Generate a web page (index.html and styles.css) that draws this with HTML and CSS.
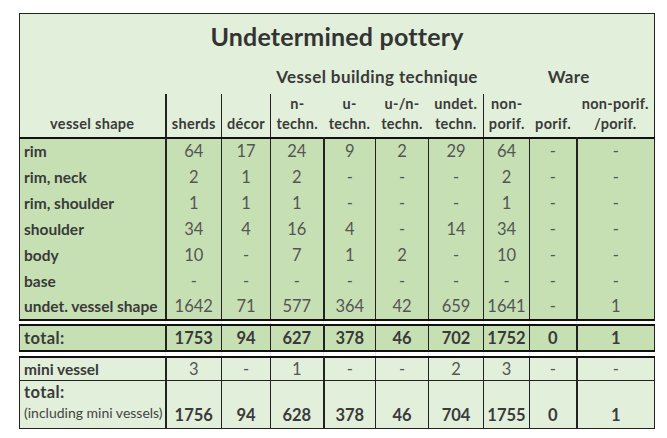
FILE: index.html
```html
<!DOCTYPE html>
<html>
<head>
<meta charset="utf-8">
<link rel="stylesheet" href="styles.css">
</head>
<body>
<table class="pot">
  <colgroup>
    <col class="c-shape"><col class="c-sherds"><col class="c-decor"><col class="c-n"><col class="c-u"><col class="c-un"><col class="c-undet"><col class="c-nonp"><col class="c-porif"><col class="c-last">
  </colgroup>
  <tr class="r-title"><td colspan="10" class="title">Undetermined pottery</td></tr>
  <tr class="r-group">
    <td colspan="3"></td>
    <td colspan="4" class="group">Vessel building technique</td>
    <td colspan="3" class="group">Ware</td>
  </tr>
  <tr class="r-head">
    <th class="b-thick">vessel shape</th>
    <th class="b-thin">sherds</th>
    <th class="b-thin">décor</th>
    <th>n-<br>techn.</th>
    <th>u-<br>techn.</th>
    <th>u-/n-<br>techn.</th>
    <th class="b-thin">undet.<br>techn.</th>
    <th>non-<br>porif.</th>
    <th>porif.</th>
    <th>non-porif.<br>/porif.</th>
  </tr>
  <tr class="r-body first"><td class="lbl">rim</td><td>64</td><td>17</td><td class="tk">24</td><td>9</td><td>2</td><td>29</td><td>64</td><td class="tk">-</td><td>-</td></tr>
  <tr class="r-body"><td class="lbl">rim, neck</td><td>2</td><td>1</td><td class="tk">2</td><td>-</td><td>-</td><td>-</td><td>2</td><td class="tk">-</td><td>-</td></tr>
  <tr class="r-body"><td class="lbl">rim, shoulder</td><td>1</td><td>1</td><td class="tk">1</td><td>-</td><td>-</td><td>-</td><td>1</td><td class="tk">-</td><td>-</td></tr>
  <tr class="r-body"><td class="lbl">shoulder</td><td>34</td><td>4</td><td class="tk">16</td><td>4</td><td>-</td><td>14</td><td>34</td><td class="tk">-</td><td>-</td></tr>
  <tr class="r-body"><td class="lbl">body</td><td>10</td><td>-</td><td class="tk">7</td><td>1</td><td>2</td><td>-</td><td>10</td><td class="tk">-</td><td>-</td></tr>
  <tr class="r-body"><td class="lbl">base</td><td>-</td><td>-</td><td class="tk">-</td><td>-</td><td>-</td><td>-</td><td>-</td><td class="tk">-</td><td>-</td></tr>
  <tr class="r-body last"><td class="lbl">undet. vessel shape</td><td>1642</td><td>71</td><td class="tk">577</td><td>364</td><td>42</td><td>659</td><td>1641</td><td class="tk">-</td><td>1</td></tr>
  <tr class="r-gap g1"><td class="g0"></td><td></td><td></td><td></td><td></td><td></td><td></td><td></td><td></td><td></td></tr>
  <tr class="r-total"><td class="lbl">total:</td><td>1753</td><td>94</td><td class="tk">627</td><td>378</td><td>46</td><td>702</td><td>1752</td><td class="tk">0</td><td>1</td></tr>
  <tr class="r-gap g2"><td class="g0"></td><td></td><td></td><td></td><td></td><td></td><td></td><td></td><td></td><td></td></tr>
  <tr class="r-mini"><td class="lbl">mini vessel</td><td>3</td><td>-</td><td class="tk">1</td><td>-</td><td>-</td><td>2</td><td>3</td><td class="tk">-</td><td>-</td></tr>
  <tr class="r-grand"><td class="lbl"><span class="gt">total:</span><span class="sub">(including mini vessels)</span></td><td>1756</td><td>94</td><td class="tk">628</td><td>378</td><td>46</td><td>704</td><td>1755</td><td class="tk">0</td><td>1</td></tr>
</table>
</body>
</html>
```

FILE: styles.css
```css
html, body {
  margin: 0;
  padding: 0;
  background: #ffffff;
}
body {
  padding: 13px 0 0 19px;
  font-family: Lato, "Open Sans", sans-serif;
  color: #3a3a3a;
}
.pot {
  border-collapse: collapse;
  table-layout: fixed;
  width: 636px;
}
.c-shape { width: 146px; }
.c-sherds { width: 56px; }
.c-decor { width: 49px; }
.c-n { width: 53px; }
.c-u { width: 52px; }
.c-un { width: 53px; }
.c-undet { width: 55px; }
.c-nonp { width: 46px; }
.c-porif { width: 47px; }
.c-last { width: 78px; }

.pot td, .pot th {
  padding: 0;
  text-align: center;
  white-space: nowrap;
}

/* header block */
.r-title td, .r-group td, .r-head th {
  background: #e2efda;
}
.r-title td { border: 1px solid #222; border-bottom: none; }
.r-group td:first-child, .r-head th:first-child { border-left: 1px solid #222; }
.r-group td:last-child, .r-head th:last-child { border-right: 1px solid #222; }

.r-title { height: 44px; }
.title {
  font-size: 25px;
  font-weight: 700;
  color: #333;
  letter-spacing: 0.2px;
  padding-top: 2px;
  vertical-align: middle;
}
.r-group { height: 36px; }
.group {
  font-size: 17px;
  font-weight: 700;
  letter-spacing: 0.4px;
  vertical-align: bottom;
  padding-bottom: 7px !important;
}
.r-head { height: 44px; }
.r-head th {
  font-size: 14.5px;
  font-weight: 700;
  line-height: 20px;
  vertical-align: bottom;
  padding-bottom: 3px;
  letter-spacing: 0.3px;
}
.r-head th.b-thick { border-right: 2px solid #222; }
.r-head th.b-thin { border-right: 1px solid #222; }

/* body */
.r-body { height: 26px; }
.r-body td {
  background: #c6e0b4;
  font-size: 16.5px;
  color: #555;
  border-right: 1px solid #222;
  vertical-align: middle;
}
.r-body.first td { border-top: 2px solid #111; }
.r-body.last td { border-bottom: 2px solid #111; }

.lbl {
  text-align: left !important;
  padding-left: 4px !important;
  font-weight: 700;
  font-size: 15.5px !important;
  color: #3a3a3a !important;
  border-left: 1px solid #222;
}
.pot td.lbl { border-right: 2px solid #222; }
.pot td.tk { border-right: 2px solid #222; }

/* gaps */
.r-gap.g1 { height: 5px; }
.r-gap.g2 { height: 6px; }
.r-gap td {
  background: #fff;
  border-right: 1px solid #e6e6ec;
}
.r-gap td:last-child { border-right: none; }

/* total */
.r-total { height: 26px; }
.r-total td {
  background: #c6e0b4;
  font-size: 16.5px;
  font-weight: 700;
  color: #3a3a3a;
  border-top: 2px solid #111;
  border-bottom: 2px solid #111;
  border-right: 1px solid #222;
}
.r-total td.lbl { font-size: 16.5px !important; letter-spacing: 0.4px; }

/* mini */
.r-mini { height: 24px; }
.r-mini td, .r-grand td {
  background: #e2efda;
  border-right: 1px solid #222;
}
.r-mini td {
  border-top: 2px solid #111;
  font-size: 16.5px;
  color: #555;
}
.r-grand { height: 48px; }
.r-grand td {
  border-top: 1px solid #222;
  border-bottom: 1px solid #222;
  font-size: 16.5px;
  font-weight: 700;
  vertical-align: bottom;
  padding-bottom: 3px;
}
.r-grand td.lbl { vertical-align: top; padding-bottom: 0; }
.gt {
  display: block;
  font-size: 16.5px;
  letter-spacing: 0.4px;
  line-height: 20px;
  padding-top: 1px;
}
.sub {
  display: block;
  font-size: 14px;
  font-weight: 400;
  line-height: 22px;
  color: #444;
}
```
